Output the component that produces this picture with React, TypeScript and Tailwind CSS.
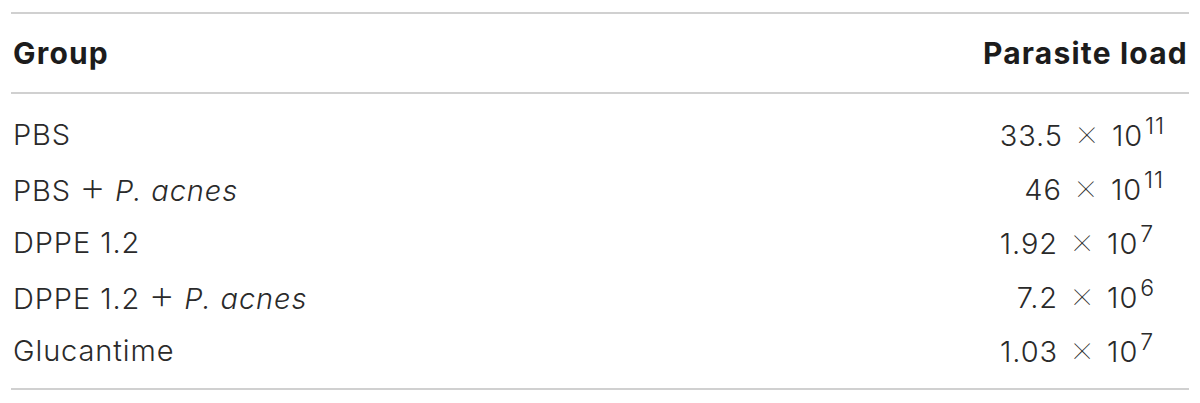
import React from 'react';

interface Row {
  group: React.ReactNode;
  base: string;
  exp: string;
  pad: string;
}

function Plus() {
  return <span className="text-[42px] font-extralight leading-none mx-[8px]">+</span>;
}

const rows: Row[] = [
  { group: 'PBS', base: '33.5', exp: '11', pad: 'pr-[24px]' },
  {
    group: (
      <>
        PBS<Plus />
        <i>P. acnes</i>
      </>
    ),
    base: '46',
    exp: '11',
    pad: 'pr-[25px]',
  },
  { group: 'DPPE 1.2', base: '1.92', exp: '7', pad: 'pr-[35px]' },
  {
    group: (
      <>
        DPPE 1.2<Plus />
        <i>P. acnes</i>
      </>
    ),
    base: '7.2',
    exp: '6',
    pad: 'pr-[34px]',
  },
  { group: 'Glucantime', base: '1.03', exp: '7', pad: 'pr-[35px]' },
];

export default function App() {
  return (
    <div className="w-[1200px] h-[403px] bg-white pt-[12px] px-[11px] font-['Inter','Liberation_Sans',sans-serif]">
      <div className="border-t-2 border-b-2 border-[#d0d0d0]">
        <div className="flex items-center justify-between h-[80px] pl-[2px] pr-[1px] text-[30px] font-bold tracking-[1.2px] text-[#1c1c1c] border-b-2 border-[#d0d0d0]">
          <span>Group</span>
          <span>Parasite load</span>
        </div>
        <div className="pt-[14px] pb-[10px] text-[29px] font-light tracking-[0.9px] text-[#2a2a2a]">
          {rows.map((r, i) => (
            <div key={i} className="flex items-center justify-between h-[54px] pl-[2px]">
              <span className="flex items-baseline">{r.group}</span>
              <span className={`${r.pad} flex items-baseline`}>
                <span>{r.base}</span>
                <span className="mx-[12px] text-[38px] font-thin leading-none">×</span>
                <span>10</span>
                <sup className="text-[23px] relative top-[-12px] ml-[2px]">{r.exp}</sup>
              </span>
            </div>
          ))}
        </div>
      </div>
    </div>
  );
}
